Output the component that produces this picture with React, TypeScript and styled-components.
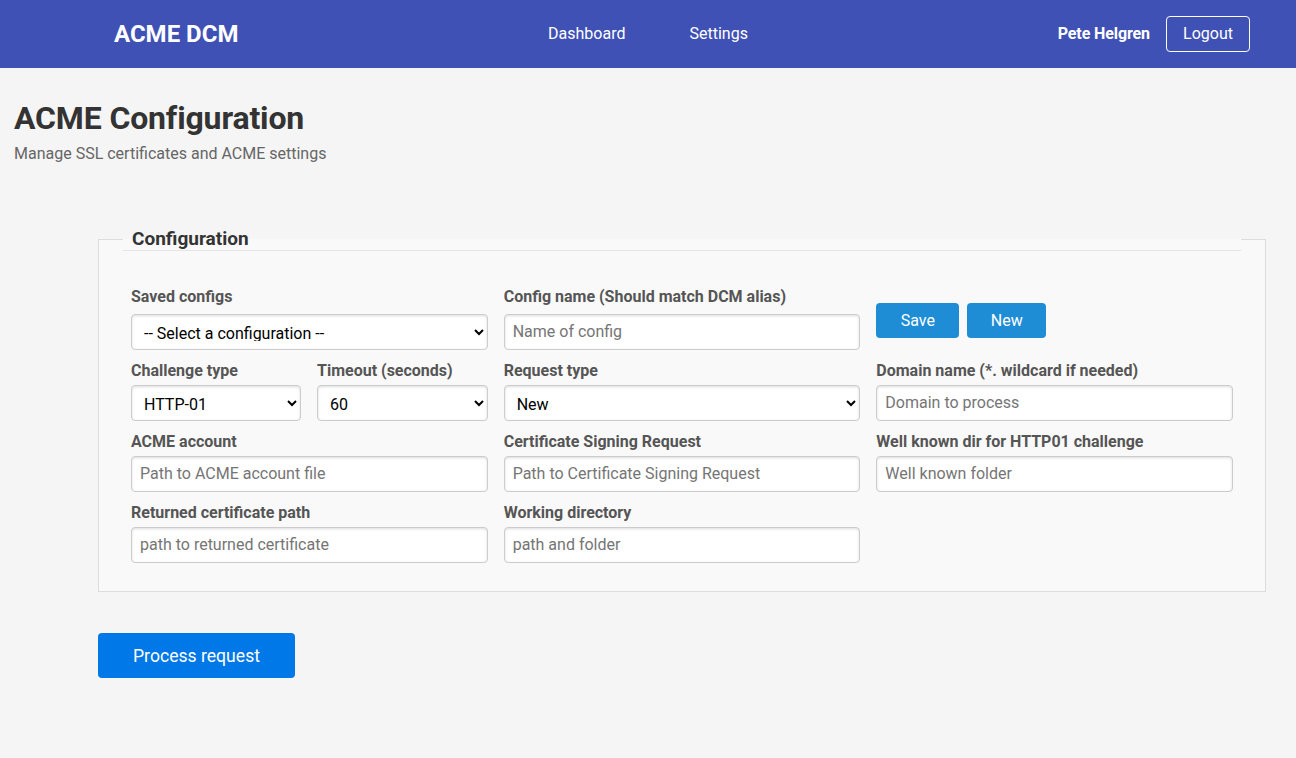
import React from "react";
import styled, { createGlobalStyle } from "styled-components";

const GlobalStyle = createGlobalStyle`
  html, body {
    margin: 0;
    padding: 0;
    background: #f5f5f5;
    font-family: Roboto, "Liberation Sans", sans-serif;
    color: #333;
  }
  * {
    box-sizing: border-box;
  }
`;

const Page = styled.div`
  min-height: 758px;
  overflow: hidden;
`;

const Header = styled.header`
  display: grid;
  grid-template-columns: 1fr auto 1fr;
  align-items: center;
  height: 68px;
  background: #3f51b5;
  color: #fff;
`;

const Brand = styled.div`
  padding-left: 114px;
  font-size: 24px;
  font-weight: 700;
`;

const Nav = styled.nav`
  display: flex;
  gap: 64px;
  padding-bottom: 2px;
`;

const NavLink = styled.a`
  font-size: 16px;
  color: #fff;
  text-decoration: none;
`;

const UserArea = styled.div`
  display: flex;
  justify-content: flex-end;
  align-items: center;
  gap: 16px;
  padding-right: 46px;
`;

const UserName = styled.span`
  padding-bottom: 2px;
  font-size: 16px;
  font-weight: 700;
  letter-spacing: -0.1px;
`;

const LogoutButton = styled.button`
  width: 84px;
  height: 36px;
  padding: 0 0 2px;
  background: transparent;
  border: 1px solid #fff;
  border-radius: 4px;
  color: #fff;
  font-family: inherit;
  font-size: 16px;
`;

const TitleBlock = styled.div`
  padding: 32px 14px 0;
`;

const Title = styled.h1`
  margin: 0;
  font-size: 32px;
  line-height: 37px;
  font-weight: 700;
  letter-spacing: -0.15px;
  color: #333;
`;

const Subtitle = styled.p`
  margin: 7px 0 0;
  font-size: 16px;
  line-height: 19px;
  color: #666;
`;

const Content = styled.main`
  padding: 65px 30px 0 98px;
`;

const Panel = styled.fieldset`
  margin: 0;
  padding: 0 24px 28px;
  min-width: 0;
  background: #f9f9f9;
  border: 1px solid #ddd;
`;

const PanelLegend = styled.legend`
  display: block;
  width: 100%;
  padding: 0 10px 1px 9px;
  font-size: 19px;
  line-height: 21px;
  font-weight: 700;
  color: #333;
  border-bottom: 1px solid #e5e5e5;
`;

const FormGrid = styled.div`
  display: grid;
  grid-template-columns: repeat(3, 1fr);
  column-gap: 16px;
  row-gap: 11px;
  padding: 36px 8px 0;
`;

const SplitCell = styled.div`
  display: grid;
  grid-template-columns: 170px 1fr;
  column-gap: 16px;
`;

const Field = styled.div`
  display: flex;
  flex-direction: column;
`;

const Label = styled.label<{ $gap?: number }>`
  font-size: 16px;
  line-height: 19px;
  font-weight: 700;
  color: #555;
  margin-bottom: ${(p) => p.$gap ?? 5}px;
`;

const TextInput = styled.input`
  width: 100%;
  height: 36px;
  padding: 0 8px 2px;
  background: #fff;
  border: 1px solid #ccc;
  border-radius: 4px;
  box-shadow: inset 0 1px 3px #ddd;
  font-family: inherit;
  font-size: 16px;
  color: #333;
  &::placeholder {
    color: #757575;
  }
`;

const SelectInput = styled.select`
  width: 100%;
  height: 36px;
  padding: 8px;
  background: #fff;
  border: 1px solid #ccc;
  border-radius: 4px;
  box-shadow: inset 0 1px 3px #ddd;
  font-family: inherit;
  font-size: 16px;
  color: #000;
`;

const ButtonRow = styled.div`
  display: flex;
  align-items: flex-start;
  gap: 8px;
  padding-top: 16px;
`;

const SmallButton = styled.button<{ $width: number }>`
  width: ${(p) => p.$width}px;
  height: 35px;
  background: #1f8dd6;
  border: none;
  border-radius: 4px;
  color: #fff;
  font-family: inherit;
  font-size: 16px;
`;

const ProcessButton = styled.button`
  display: block;
  width: 197px;
  height: 45px;
  margin-top: 41px;
  background: #0078e7;
  border: none;
  border-radius: 4px;
  color: #fff;
  font-family: inherit;
  font-size: 17.6px;
`;

const App = () => {
  return (
    <Page>
      <GlobalStyle />
      <Header>
        <Brand>ACME DCM</Brand>
        <Nav>
          <NavLink href="#">Dashboard</NavLink>
          <NavLink href="#">Settings</NavLink>
        </Nav>
        <UserArea>
          <UserName>Pete Helgren</UserName>
          <LogoutButton>Logout</LogoutButton>
        </UserArea>
      </Header>
      <TitleBlock>
        <Title>ACME Configuration</Title>
        <Subtitle>Manage SSL certificates and ACME settings</Subtitle>
      </TitleBlock>
      <Content>
        <Panel>
          <PanelLegend>Configuration</PanelLegend>
          <FormGrid>
            <Field>
              <Label $gap={8}>Saved configs</Label>
              <SelectInput defaultValue="">
                <option value="">-- Select a configuration --</option>
              </SelectInput>
            </Field>
            <Field>
              <Label $gap={8}>Config name (Should match DCM alias)</Label>
              <TextInput placeholder="Name of config" />
            </Field>
            <ButtonRow>
              <SmallButton $width={83}>Save</SmallButton>
              <SmallButton $width={79}>New</SmallButton>
            </ButtonRow>

            <SplitCell>
              <Field>
                <Label>Challenge type</Label>
                <SelectInput>
                  <option>HTTP-01</option>
                </SelectInput>
              </Field>
              <Field>
                <Label>Timeout (seconds)</Label>
                <SelectInput>
                  <option>60</option>
                </SelectInput>
              </Field>
            </SplitCell>
            <Field>
              <Label>Request type</Label>
              <SelectInput>
                <option>New</option>
              </SelectInput>
            </Field>
            <Field>
              <Label>Domain name (*. wildcard if needed)</Label>
              <TextInput placeholder="Domain to process" />
            </Field>

            <Field>
              <Label>ACME account</Label>
              <TextInput placeholder="Path to ACME account file" />
            </Field>
            <Field>
              <Label>Certificate Signing Request</Label>
              <TextInput placeholder="Path to Certificate Signing Request" />
            </Field>
            <Field>
              <Label>Well known dir for HTTP01 challenge</Label>
              <TextInput placeholder="Well known folder" />
            </Field>

            <Field>
              <Label>Returned certificate path</Label>
              <TextInput placeholder="path to returned certificate" />
            </Field>
            <Field>
              <Label>Working directory</Label>
              <TextInput placeholder="path and folder" />
            </Field>
          </FormGrid>
        </Panel>
        <ProcessButton>Process request</ProcessButton>
      </Content>
    </Page>
  );
};

export default App;
